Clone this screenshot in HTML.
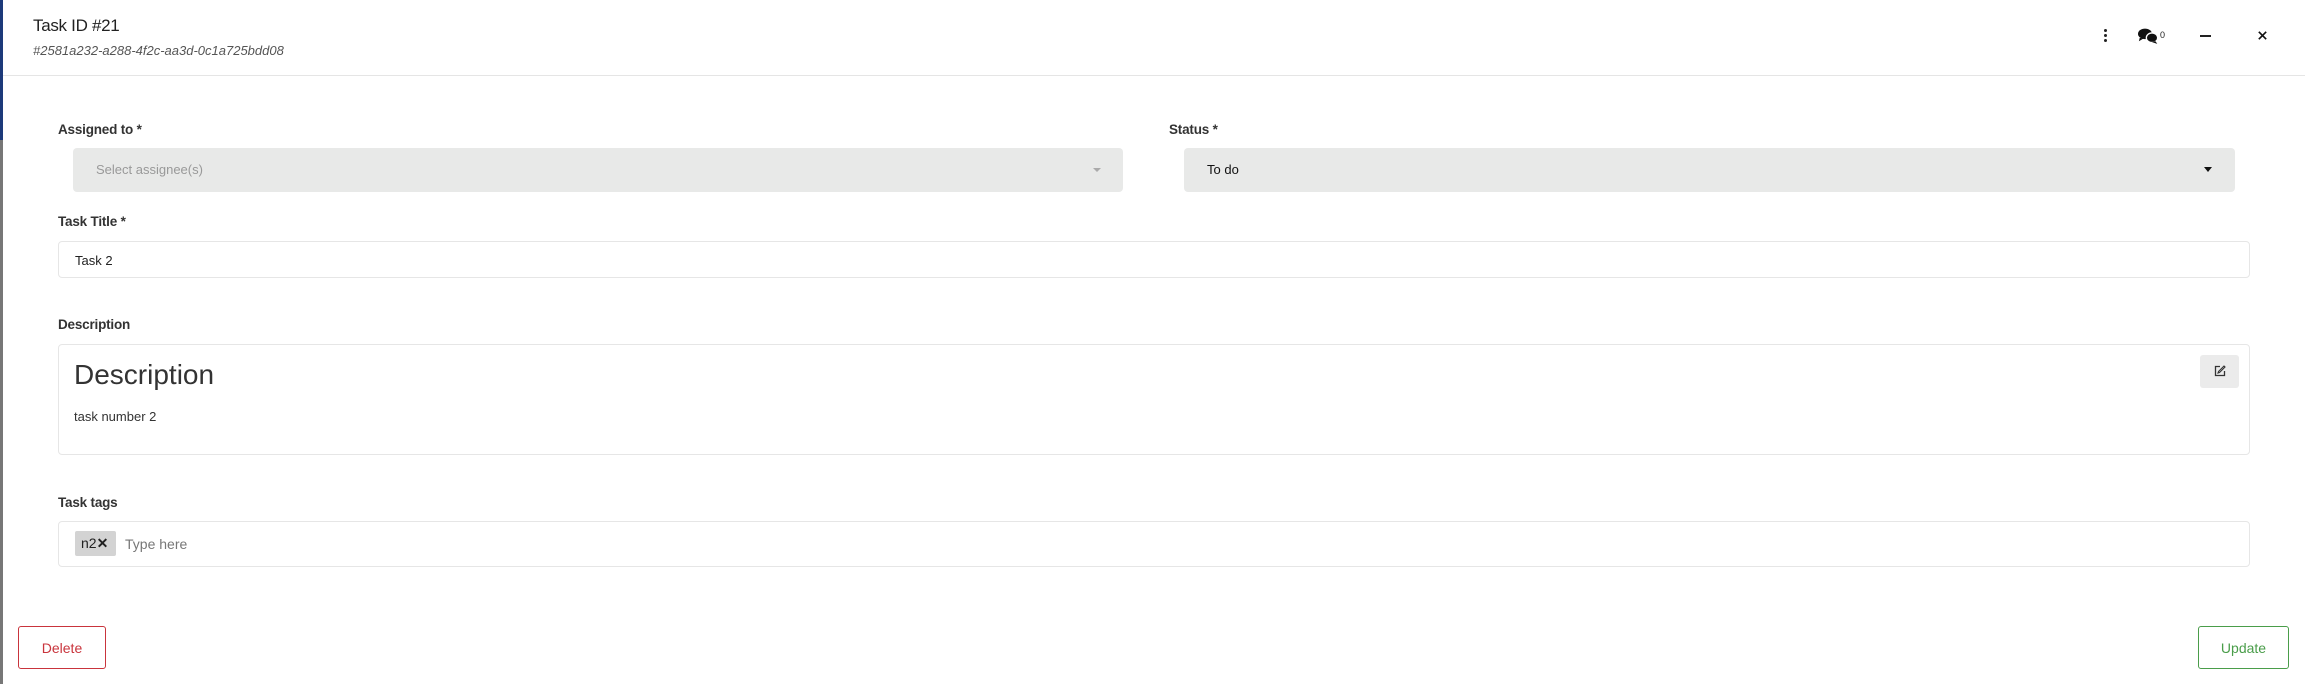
<!DOCTYPE html>
<html><head><meta charset="utf-8"><style>
*{box-sizing:border-box;margin:0;padding:0}
body{width:2305px;height:684px;overflow:hidden;background:#fff;font-family:"Liberation Sans",sans-serif;color:#222;position:relative}
.a{position:absolute}
.lbl{font-size:13.5px;font-weight:bold;color:#333;letter-spacing:-0.2px}
.box{border:1px solid #e6e6e6;border-radius:4px;background:#fff}
.sel{background:#e8e9e8;border-radius:4px}
.btn{border-radius:3px;font-size:14px;display:flex;align-items:center;justify-content:center;background:#fff}
</style></head><body>
<div class="a" style="left:0;top:0;width:3px;height:684px;background:#777"></div>
<div class="a" style="left:0;top:0;width:3px;height:140px;background:#1d3a7a"></div>
<div class="a" style="left:33px;top:16px;font-size:17px;color:#222;letter-spacing:-0.3px">Task ID #21</div>
<div class="a" style="left:33px;top:43px;font-size:13px;font-style:italic;color:#555">#2581a232-a288-4f2c-aa3d-0c1a725bdd08</div>
<div class="a" style="left:2104px;top:29px;width:3px;height:13px">
 <div class="a" style="left:0;top:0;width:3px;height:3px;border-radius:2px;background:#222"></div>
 <div class="a" style="left:0;top:5px;width:3px;height:3px;border-radius:2px;background:#222"></div>
 <div class="a" style="left:0;top:10px;width:3px;height:3px;border-radius:2px;background:#222"></div>
</div>
<svg class="a" style="left:2138px;top:28px" width="21" height="16" viewBox="0 0 24 18"><ellipse cx="8" cy="6.5" rx="8" ry="6" fill="#111"/><path d="M2 11 L1 15 L6 12Z" fill="#111"/><ellipse cx="16" cy="11" rx="6.5" ry="5.5" fill="#111" stroke="#fff" stroke-width="1.5"/><path d="M20 15 L22 18 L16 16Z" fill="#111"/></svg>
<div class="a" style="left:2160px;top:30px;font-size:9px;color:#222">0</div>
<div class="a" style="left:2200px;top:35px;width:11px;height:2px;background:#222"></div>
<svg class="a" style="left:2258px;top:31px" width="9" height="9" viewBox="0 0 11 11"><path d="M1 1L10 10M10 1L1 10" stroke="#111" stroke-width="2"/></svg>
<div class="a" style="left:3px;top:75px;width:2302px;height:1px;background:#e5e5e5"></div>

<div class="a lbl" style="left:58px;top:122px">Assigned to *</div>
<div class="a sel" style="left:73px;top:148px;width:1050px;height:44px"><div class="a" style="left:23px;top:14px;font-size:13px;color:#999">Select assignee(s)</div>
<div class="a" style="left:1020px;top:20px;border-left:4px solid transparent;border-right:4px solid transparent;border-top:4px solid #aaa"></div></div>
<div class="a lbl" style="left:1169px;top:122px">Status *</div>
<div class="a sel" style="left:1184px;top:148px;width:1051px;height:44px"><div class="a" style="left:23px;top:14px;font-size:13px;color:#111">To do</div>
<div class="a" style="left:1020px;top:19px;border-left:4.5px solid transparent;border-right:4.5px solid transparent;border-top:5px solid #111"></div></div>

<div class="a lbl" style="left:58px;top:214px">Task Title *</div>
<div class="a box" style="left:58px;top:241px;width:2192px;height:37px"><div class="a" style="left:16px;top:11px;font-size:13px">Task 2</div></div>

<div class="a lbl" style="left:58px;top:317px">Description</div>
<div class="a box" style="left:58px;top:344px;width:2192px;height:111px">
 <div class="a" style="left:15px;top:14px;font-size:28px;color:#333">Description</div>
 <div class="a" style="left:15px;top:64px;font-size:13px;color:#333">task number 2</div>
 <div class="a" style="left:2141px;top:10px;width:39px;height:33px;background:#ebebeb;border-radius:3px"></div>
 <svg class="a" style="left:2155px;top:20px" width="12" height="12" viewBox="0 0 12 12"><path d="M6 1.5H1.5V10.5H10.5V6" fill="none" stroke="#333" stroke-width="1.3"/><path d="M10 1L11 2L5.5 7.5L4 8L4.5 6.5Z" fill="none" stroke="#333" stroke-width="1.1"/></svg>
</div>

<div class="a lbl" style="left:58px;top:495px">Task tags</div>
<div class="a box" style="left:58px;top:521px;width:2192px;height:46px">
 <div class="a" style="left:16px;top:9px;width:41px;height:25px;background:#d3d3d3;border-radius:2px;font-size:14px;line-height:25px;padding-left:6px;color:#222">n2<span style="font-weight:bold">✕</span></div>
 <div class="a" style="left:66px;top:14px;font-size:14px;color:#777">Type here</div>
</div>

<div class="a btn" style="left:18px;top:626px;width:88px;height:43px;border:1px solid #c9343c;color:#c9343c">Delete</div>
<div class="a btn" style="left:2198px;top:626px;width:91px;height:43px;border:1px solid #4a9d4a;color:#4a9d4a">Update</div>
</body></html>
